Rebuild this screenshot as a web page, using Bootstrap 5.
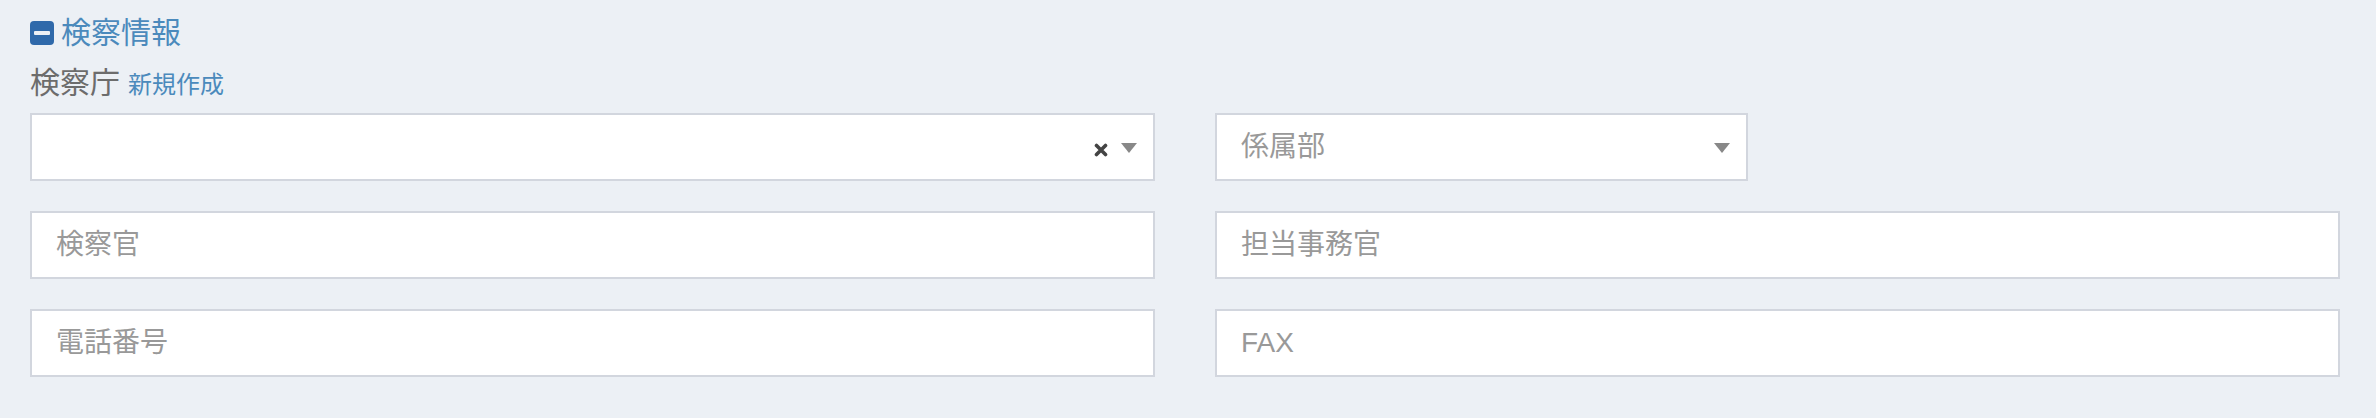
<!DOCTYPE html>
<html lang="ja">
<head>
<meta charset="utf-8">
<meta name="viewport" content="width=device-width, initial-scale=1">
<title>検察情報</title>
<link href="https://cdn.jsdelivr.net/npm/bootstrap@5.3.0/dist/css/bootstrap.min.css" rel="stylesheet">
<style>
  body {
    background: #ecf0f5;
    font-family: "Liberation Sans", "Noto Sans CJK JP", sans-serif;
    font-size: 28px;
    color: #6c6c6c;
  }
  .case-form { padding: 8px 36px 36px 30px; }
  .section-line { line-height: 50px; font-size: 30px; }
  .section-line a, .section-line .toggle { color: #4b8abc; }
  .toggle { font-size: 30px; line-height: 50px; gap: 7px; }
  .label-line { margin-bottom: 5px; }
  .new-link { font-size: 24px; line-height: 30px; }
  .form-grid { --bs-gutter-x: 60px; --bs-gutter-y: 30px; }
  .form-grid .form-control, .form-grid .form-select {
    height: 68px;
    padding: 0 24px;
    border: 2px solid #d2d6de;
    border-radius: 0;
    background-color: #fff;
    font-size: 28px;
    line-height: 40px;
    color: #999;
  }
  .form-grid .form-control::placeholder { color: #999; opacity: 1; }
  .form-grid .form-select {
    background-image: url("data:image/svg+xml,%3Csvg xmlns='http://www.w3.org/2000/svg' viewBox='0 0 16 10'%3E%3Cpath fill='%23888' d='M0 0h16L8 10z'/%3E%3C/svg%3E");
    background-size: 16px 10px;
    background-position: right 16px top 28px;
  }
  .clear-btn { right: 39px; width: 30px; line-height: 0; padding: 8px; top: 22px; }
  .clear-btn svg { display: block; }
</style>
</head>
<body>
<form class="case-form">
  <div class="section-line d-flex">
    <button type="button" class="toggle btn btn-link p-0 border-0 text-decoration-none d-flex align-items-center" aria-expanded="true">
      <svg width="24" height="24" viewBox="0 0 24 24" aria-hidden="true"><rect width="24" height="24" rx="4" fill="#2f69aa"/><rect x="4" y="10" width="16" height="4" rx="1" fill="#ecf0f5"/></svg>
      <span>検察情報</span>
    </button>
  </div>
  <div class="section-line label-line d-flex align-items-baseline gap-2">
    <label for="office">検察庁</label>
    <a href="#" class="new-link text-decoration-none">新規作成</a>
  </div>
  <div class="row form-grid">
    <div class="col-6">
      <div class="position-relative">
        <select id="office" class="form-select"><option value="" selected></option></select>
        <button type="button" class="clear-btn btn border-0 position-absolute" aria-label="クリア">
          <svg width="14" height="14" viewBox="0 0 14 14" aria-hidden="true"><path d="M2.500 2.500l9 9m0-9l-9 9" stroke="#444" stroke-width="3.600" stroke-linecap="round"/></svg>
        </button>
      </div>
    </div>
    <div class="col-6">
      <div class="row form-grid">
        <div class="col-6">
          <select class="form-select" aria-label="係属部"><option selected>係属部</option></select>
        </div>
      </div>
    </div>
    <div class="col-6"><input type="text" class="form-control" placeholder="検察官" aria-label="検察官"></div>
    <div class="col-6"><input type="text" class="form-control" placeholder="担当事務官" aria-label="担当事務官"></div>
    <div class="col-6"><input type="tel" class="form-control" placeholder="電話番号" aria-label="電話番号"></div>
    <div class="col-6"><input type="tel" class="form-control" placeholder="FAX" aria-label="FAX"></div>
  </div>
</form>
<script src="https://cdn.jsdelivr.net/npm/bootstrap@5.3.0/dist/js/bootstrap.bundle.min.js"></script>
</body>
</html>
